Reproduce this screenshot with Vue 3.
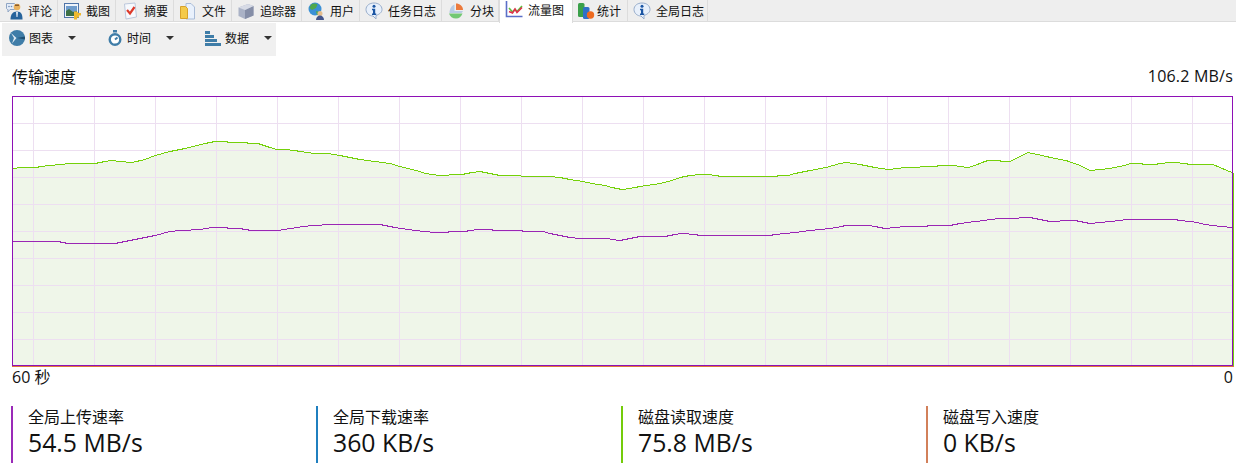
<script setup>
const tabs = [
  { label: '评论', w: 58, icon: 'comment' },
  { label: '截图', w: 58, icon: 'shot' },
  { label: '摘要', w: 58, icon: 'summary' },
  { label: '文件', w: 58, icon: 'file' },
  { label: '追踪器', w: 70, icon: 'tracker' },
  { label: '用户', w: 58, icon: 'user' },
  { label: '任务日志', w: 82, icon: 'info' },
  { label: '分块', w: 57, icon: 'pie' },
  { label: '流量图', w: 74, icon: 'chart', active: true },
  { label: '统计', w: 55, icon: 'stats', tight: true },
  { label: '全局日志', w: 80, icon: 'info' }
]
const tools = [
  { label: '图表', icon: 'graph', w: 98 },
  { label: '时间', icon: 'clock', w: 98 },
  { label: '数据', icon: 'bars', w: 78 }
]
const green = [[12,168],[22,167],[37,167],[40,166],[50,165],[60,164],[70,163],[95,163],[105,161],[112,160],[120,161],[132,162],[145,159],[155,155],[170,151],[185,148],[205,143],[215,141],[225,141],[230,142],[245,142],[250,143],[258,143],[270,147],[277,149],[285,149],[295,150],[300,151],[315,153],[328,153],[340,155],[360,159],[390,163],[400,166],[420,171],[425,173],[440,175],[448,175],[450,174],[462,174],[472,172],[480,171],[490,173],[500,175],[520,175],[522,176],[550,176],[560,177],[570,179],[583,181],[592,183],[605,185],[612,187],[622,189],[630,188],[640,186],[660,183],[672,180],[680,177],[690,175],[700,174],[708,174],[715,175],[722,176],[775,176],[780,175],[788,175],[795,173],[810,170],[826,167],[840,163],[846,162],[860,164],[875,167],[888,169],[898,168],[905,167],[918,167],[922,166],[935,166],[940,165],[953,165],[960,166],[968,167],[975,165],[982,162],[988,160],[998,160],[1003,161],[1010,161],[1016,158],[1028,152],[1042,155],[1055,158],[1066,160],[1080,165],[1090,170],[1100,169],[1110,168],[1125,165],[1130,163],[1140,163],[1145,164],[1155,164],[1160,163],[1170,162],[1175,162],[1185,163],[1190,164],[1213,164],[1220,167],[1232,172]]
const purple = [[12,241],[58,241],[68,243],[115,243],[125,241],[140,238],[155,235],[170,231],[180,230],[190,230],[192,229],[200,229],[212,227],[225,227],[230,228],[240,228],[245,229],[252,230],[278,230],[290,228],[298,227],[302,226],[315,225],[330,224],[380,224],[385,225],[395,227],[415,230],[435,232],[447,232],[450,231],[465,231],[470,230],[478,229],[490,229],[495,230],[520,230],[525,231],[543,231],[550,233],[560,235],[570,237],[580,238],[608,238],[612,239],[620,240],[635,237],[640,236],[665,236],[675,234],[682,233],[695,234],[700,235],[770,235],[775,234],[785,233],[795,232],[810,230],[830,228],[842,226],[845,225],[868,225],[875,226],[885,228],[895,227],[905,226],[925,226],[930,225],[950,225],[960,223],[975,221],[985,220],[990,219],[1000,218],[1018,218],[1020,217],[1030,217],[1040,219],[1050,221],[1058,221],[1062,220],[1075,220],[1080,221],[1085,222],[1090,223],[1100,222],[1110,221],[1120,220],[1127,219],[1175,219],[1180,220],[1190,221],[1197,222],[1205,224],[1212,225],[1222,226],[1232,227]]
const pts = a => a.map(([x, y]) => `${x - 12},${y - 95.5}`).join(' ')
const line1 = pts(green)
const line2 = pts(purple)
const area = `0,269 ${line1} 1220,269`
const vLines = Array.from({ length: 20 }, (_, i) => 21.5 + i * 61)
const hLines = Array.from({ length: 9 }, (_, i) => 27.5 + i * 27)
const stats = [
  { label: '全局上传速率', value: '54.5 MB/s', color: '#9a2ab8' },
  { label: '全局下载速率', value: '360 KB/s', color: '#1f7fbf' },
  { label: '磁盘读取速度', value: '75.8 MB/s', color: '#74cc0a' },
  { label: '磁盘写入速度', value: '0 KB/s', color: '#d2805a' }
]
</script>

<template>
  <div class="page">
    <div class="tabs">
      <div v-for="t in tabs" :key="t.label" class="tab" :class="{ active: t.active, tight: t.tight }" :style="{ width: t.w + 'px' }">
        <svg class="ticon" viewBox="0 0 18 18">
          <template v-if="t.icon === 'comment'">
            <path d="M1.500 1.500h8l1 1v4l-1 1H5l-2 2.500V7.500H2.500l-1-1z" fill="#e4ecf8" stroke="#8fa5c4"/>
            <circle cx="4" cy="4.500" r=".8" fill="#6f8db5"/>
            <circle cx="6.500" cy="4.500" r=".8" fill="#6f8db5"/>
            <circle cx="12" cy="5" r="3.300" fill="#e9b25e"/>
            <path d="M10 2.500h4v1.500h-4z" fill="#8a5a2c"/>
            <path d="M5.500 17.500c0-5 2-8 6.500-8s5.500 3 5.500 8z" fill="#27649c"/>
            <path d="M11 10h2l-.5 5h-1z" fill="#dfe9f5"/>
          </template>
          <template v-else-if="t.icon === 'shot'">
            <rect x="1.500" y="1.500" width="14" height="14" fill="#eef3fa" stroke="#4f74a8"/>
            <rect x="3" y="4" width="11" height="10" fill="#6f9ccc"/>
            <path d="M3 14V9l3-2 4 3 4-1v5z" fill="#3e7146"/>
            <path d="M11 9.500h3l1.500 1.500h2.500v2.500h-2v2h-2v2h-3z" fill="#efb92f"/>
          </template>
          <template v-else-if="t.icon === 'summary'">
            <path d="M3.500 2l10.500-1 1.500 14-10.500 2z" fill="#f7f9fd" stroke="#bcc8dc"/>
            <path d="M6 8l3 3.500L13.500 5" fill="none" stroke="#dd3a2b" stroke-width="2.200"/>
          </template>
          <template v-else-if="t.icon === 'file'">
            <path d="M7 1.500h5l3.500 3.500v12H7z" fill="#e9f1fc" stroke="#a9bcd8"/>
            <path d="M1.500 4.500h5l2 2v10h-7z" fill="#f4ca4a" stroke="#d7a22c"/>
          </template>
          <template v-else-if="t.icon === 'tracker'">
            <path d="M1.500 5.500L11 2l5.500 2v9.500L8 17l-6.500-3z" fill="#aab2c6"/>
            <path d="M8 8l8.500-4v9.500L8 17z" fill="#858ea7"/>
            <path d="M1.500 5.500L11 2l5.500 2L8 8z" fill="#d7dbe6"/>
          </template>
          <template v-else-if="t.icon === 'user'">
            <circle cx="8" cy="7" r="6.500" fill="#3b90d6"/>
            <path d="M4 2.500c2-1.500 5-1.500 6.500 0L9 6 5 8 2.500 6zM9 9l3.500 1L10 13.500z" fill="#4fa84d"/>
            <circle cx="13" cy="11.500" r="2.500" fill="#e5bd8c"/>
            <path d="M9 18c0-3 2-4.500 4-4.500s4 1.500 4 4.500z" fill="#44558c"/>
          </template>
          <template v-else-if="t.icon === 'info'">
            <path d="M9 1C4.500 1 1 3.600 1 7.500S4.500 14 8 14l3 3v-3.500c3-1 6-3 6-6C17 3.600 13.500 1 9 1z" fill="#e8f0fb" stroke="#98adcb"/>
            <circle cx="9" cy="4.300" r="1.500" fill="#1b55a3"/>
            <path d="M7 6.800h3.200v4.700h1V13H7v-1.500h1V8.300H7z" fill="#1b55a3"/>
          </template>
          <template v-else-if="t.icon === 'pie'">
            <path d="M9 1.500c3.500 0 7 2.500 7 6.500H9z" fill="#ec7a3c"/>
            <path d="M7.500 2.500V9H16c-.5 1-1 1.500-1.500 2H2.500c0-4 2-7.500 5-8.500z" fill="#b8cbe4"/>
            <path d="M2 11.500h13.500c-1 3-3.500 5-6.500 5-3.500 0-6-2-7-5z" fill="#72c872"/>
          </template>
          <template v-else-if="t.icon === 'chart'">
            <path d="M1.500 0v15.500H17.500" fill="none" stroke="#5b6fc8" stroke-width="1.600"/>
            <path d="M4 7l3.500 4 2.500-2.500 2 2L17 5" fill="none" stroke="#5fbf3c" stroke-width="1.600"/>
            <path d="M4 10.500L7.500 12 10 8l2 3.500L17 6.500" fill="none" stroke="#e0304a" stroke-width="1.600"/>
          </template>
          <template v-else-if="t.icon === 'stats'">
            <rect x="1" y="1" width="6.500" height="14" rx="1.500" fill="#3aa04a"/>
            <rect x="6" y="5" width="6.500" height="12" rx="1.500" fill="#2f70c8"/>
            <circle cx="13.500" cy="13" r="3.700" fill="#ee6a1f"/>
          </template>
        </svg>
        <span>{{ t.label }}</span>
      </div>
    </div>

    <div class="toolbar">
      <div v-for="t in tools" :key="t.label" class="tool" :style="{ width: t.w + 'px' }">
        <svg class="tool-icon" viewBox="0 0 16 16">
          <template v-if="t.icon === 'graph'">
            <circle cx="8" cy="8" r="8" fill="#3f7da8"/>
            <path d="M2 3l5.500 5L3 13.500 5 8z" fill="#dfeaf3"/>
            <path d="M8 8l8-1.500v3z" fill="#1f4f73"/>
          </template>
          <template v-else-if="t.icon === 'clock'">
            <rect x="6" y="0" width="4" height="2.500" fill="#3f7da8"/>
            <circle cx="8" cy="9.500" r="5.300" fill="#fff" stroke="#3f7da8" stroke-width="2.400"/>
            <path d="M8 9.500l2.500-2" stroke="#3f7da8" stroke-width="2"/>
          </template>
          <template v-else>
            <path d="M0 1h5v3H0zM0 5h9v3H0zM0 9h12v3H0zM0 13h16v3H0z" fill="#3f7da8"/>
          </template>
        </svg>
        <span>{{ t.label }}</span>
        <span class="caret"></span>
      </div>
    </div>

    <div class="head">
      <span>传输速度</span>
      <span class="peak">106.2 MB/s</span>
    </div>

    <svg class="plot" width="1222" height="271" viewBox="0 0 1222 271" shape-rendering="crispEdges">
      <polygon :points="area" fill="#eff6e9"/>
      <line v-for="x in vLines" :key="'v' + x" :x1="x" :x2="x" y1="0" y2="270" stroke="#eddff1"/>
      <line v-for="y in hLines" :key="'h' + y" x1="0" x2="1220" :y1="y" :y2="y" stroke="#eddff1"/>
      <polyline :points="line1" fill="none" stroke="#74d10a"/>
      <polyline :points="line2" fill="none" stroke="#9a26b4"/>
      <rect x="0.500" y="0.500" width="1220" height="269" fill="none" stroke="#8e10b6"/>
      <line x1="0" x2="1222" y1="270.500" y2="270.500" stroke="#e0763a"/>
      <line x1="1221.500" x2="1221.500" y1="77" y2="270" stroke="#74d10a"/>
    </svg>

    <div class="axis">
      <span>60 秒</span>
      <span>0</span>
    </div>

    <div class="stats">
      <div v-for="s in stats" :key="s.label" class="stat" :style="{ borderColor: s.color }">
        <div class="stat-label">{{ s.label }}</div>
        <div class="stat-value">{{ s.value }}</div>
      </div>
    </div>
  </div>
</template>

<style>
html, body { margin: 0; background: #fff; }
</style>

<style scoped>
.page {
  width: 1236px;
  height: 469px;
  overflow: hidden;
  font-family: "Open Sans", "Noto Sans CJK SC", sans-serif;
  color: #111;
  background: #fff;
}
.tabs {
  display: flex;
  height: 21px;
  margin-bottom: 1px;
  background: #eeeeee;
  border-bottom: 1px solid #dcdcdc;
}
.tab {
  display: flex;
  align-items: center;
  gap: 5px;
  box-sizing: border-box;
  padding-left: 5px;
  font-size: 12px;
  border-right: 1px solid #dcdcdc;
  white-space: nowrap;
}
.tab.tight { padding-left: 4px; gap: 2px; }
.tab.active {
  background: #fff;
  height: 23px;
  padding-bottom: 4px;
  border-left: 1px solid #dcdcdc;
}
.ticon { width: 18px; height: 18px; flex: none; }
.tool-icon { width: 16px; height: 16px; flex: none; }
.toolbar {
  display: flex;
  width: 274px;
  height: 33px;
  margin-left: 2px;
  background: #f0f0f0;
}
.tool {
  display: flex;
  align-items: center;
  gap: 4px;
  box-sizing: border-box;
  padding: 0 0 3px 7px;
  font-size: 12px;
}
.caret {
  width: 0;
  height: 0;
  margin-left: 11px;
  border-left: 4px solid transparent;
  border-right: 4px solid transparent;
  border-top: 4px solid #333;
}
.head {
  display: flex;
  justify-content: space-between;
  align-items: center;
  height: 40px;
  padding: 0 3px 0 12px;
  box-sizing: border-box;
  font-size: 16px;
}
.peak { letter-spacing: 0.2px; }
.plot { display: block; margin-left: 12px; }
.axis {
  display: flex;
  justify-content: space-between;
  height: 22px;
  line-height: 20px;
  padding: 0 3px 0 12px;
  font-size: 16px;
}
.stats {
  display: grid;
  grid-template-columns: repeat(4, 305px);
  margin: 17px 0 0 11px;
}
.stat {
  border-left: 2px solid;
  padding-left: 15px;
  height: 57px;
  box-sizing: border-box;
}
.stat-label { font-size: 16px; line-height: 22px; }
.stat-value { font-size: 24.8px; line-height: 29px; }
</style>
